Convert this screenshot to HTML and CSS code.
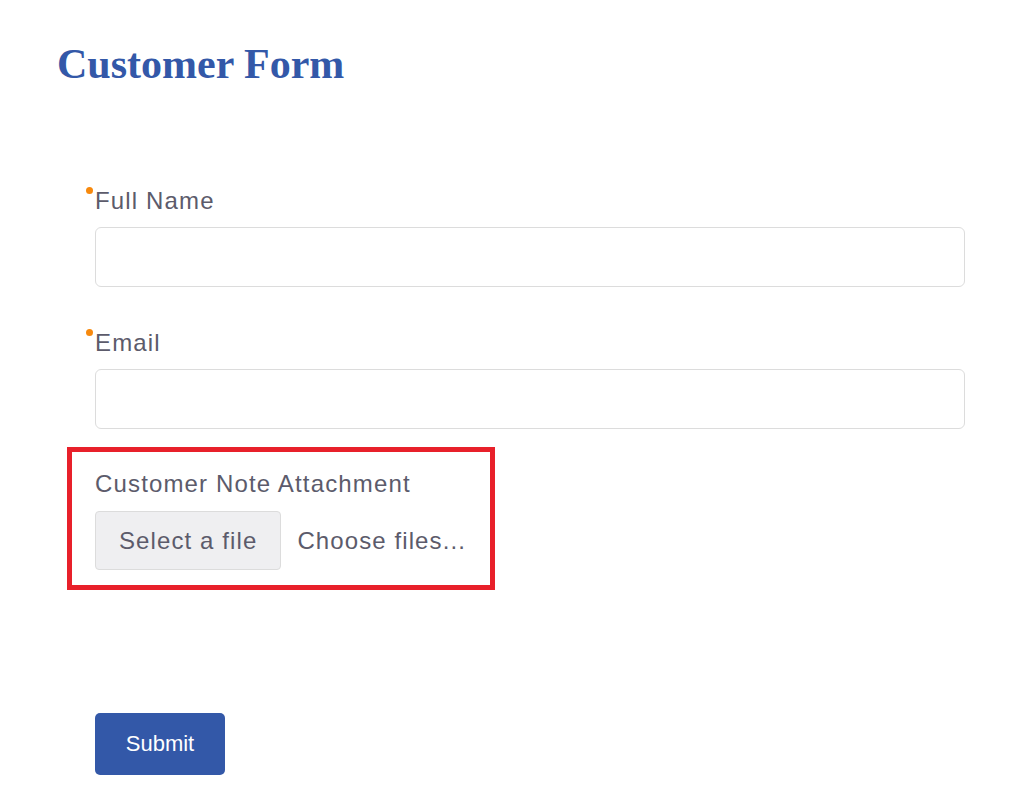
FILE: index.html
```html
<!DOCTYPE html>
<html lang="en">
<head>
<meta charset="utf-8">
<title>Customer Form</title>
<link rel="stylesheet" href="styles.css">
</head>
<body>
<div class="page">
  <h1 class="title">Customer Form</h1>
  <form class="form">
    <div class="field">
      <label class="label required">Full Name</label>
      <input class="input" type="text">
    </div>
    <div class="field">
      <label class="label required">Email</label>
      <input class="input" type="text">
    </div>
    <div class="attach">
      <div class="label">Customer Note Attachment</div>
      <div class="file-row">
        <span class="file-btn">Select a file</span>
        <span class="file-text">Choose files...</span>
      </div>
    </div>
    <div class="actions">
      <button class="submit" type="button">Submit</button>
    </div>
  </form>
</div>
</body>
</html>
```
FILE: styles.css
```css
html, body {
  margin: 0;
  padding: 0;
  background: #ffffff;
}
body {
  font-family: "Liberation Sans", Arial, sans-serif;
}
.page {
  padding: 40px 57px 0 57px;
}
.title {
  margin: 0;
  font-family: "Liberation Serif", "Times New Roman", serif;
  font-weight: bold;
  font-size: 42px;
  line-height: 48px;
  color: #3358a8;
}
.form {
  margin: 99px 0 0 38px;
  width: 870px;
}
.field {
  display: flex;
  flex-direction: column;
  margin-bottom: 42px;
}
.field:nth-child(2) {
  margin-bottom: 18px;
}
.label {
  position: relative;
  font-size: 24px;
  line-height: 28px;
  letter-spacing: 1.15px;
  color: #5c5b6b;
  margin-bottom: 12px;
}
.required::before {
  content: "";
  position: absolute;
  left: -9.5px;
  top: -0.5px;
  width: 7px;
  height: 7px;
  border-radius: 50%;
  background: #f7890d;
}
.input {
  box-sizing: border-box;
  width: 870px;
  height: 60px;
  border: 1px solid #dcdcdc;
  border-radius: 6px;
  background: #fff;
  margin: 0;
}
.attach {
  width: fit-content;
  margin-left: -28px;
  border: 5px solid #e8202a;
  padding: 18px 24px 15px 23px;
}
.attach .label {
  margin-bottom: 13px;
}
.file-row {
  display: flex;
  align-items: center;
  gap: 16px;
}
.file-btn {
  box-sizing: border-box;
  height: 59px;
  display: flex;
  align-items: center;
  padding: 0 23px;
  background: #efeff1;
  border: 1px solid #dcdcdc;
  border-radius: 4px;
  font-size: 24px;
  letter-spacing: 1.1px;
  color: #5c5b6b;
}
.file-text {
  font-size: 24px;
  letter-spacing: 1.1px;
  color: #5c5b6b;
}
.actions {
  margin-top: 123px;
}
.submit {
  box-sizing: border-box;
  width: 130px;
  height: 62px;
  padding: 0;
  border: none;
  border-radius: 5px;
  background: #3358a8;
  color: #ffffff;
  font-family: "Liberation Sans", Arial, sans-serif;
  font-size: 22px;
}
```
